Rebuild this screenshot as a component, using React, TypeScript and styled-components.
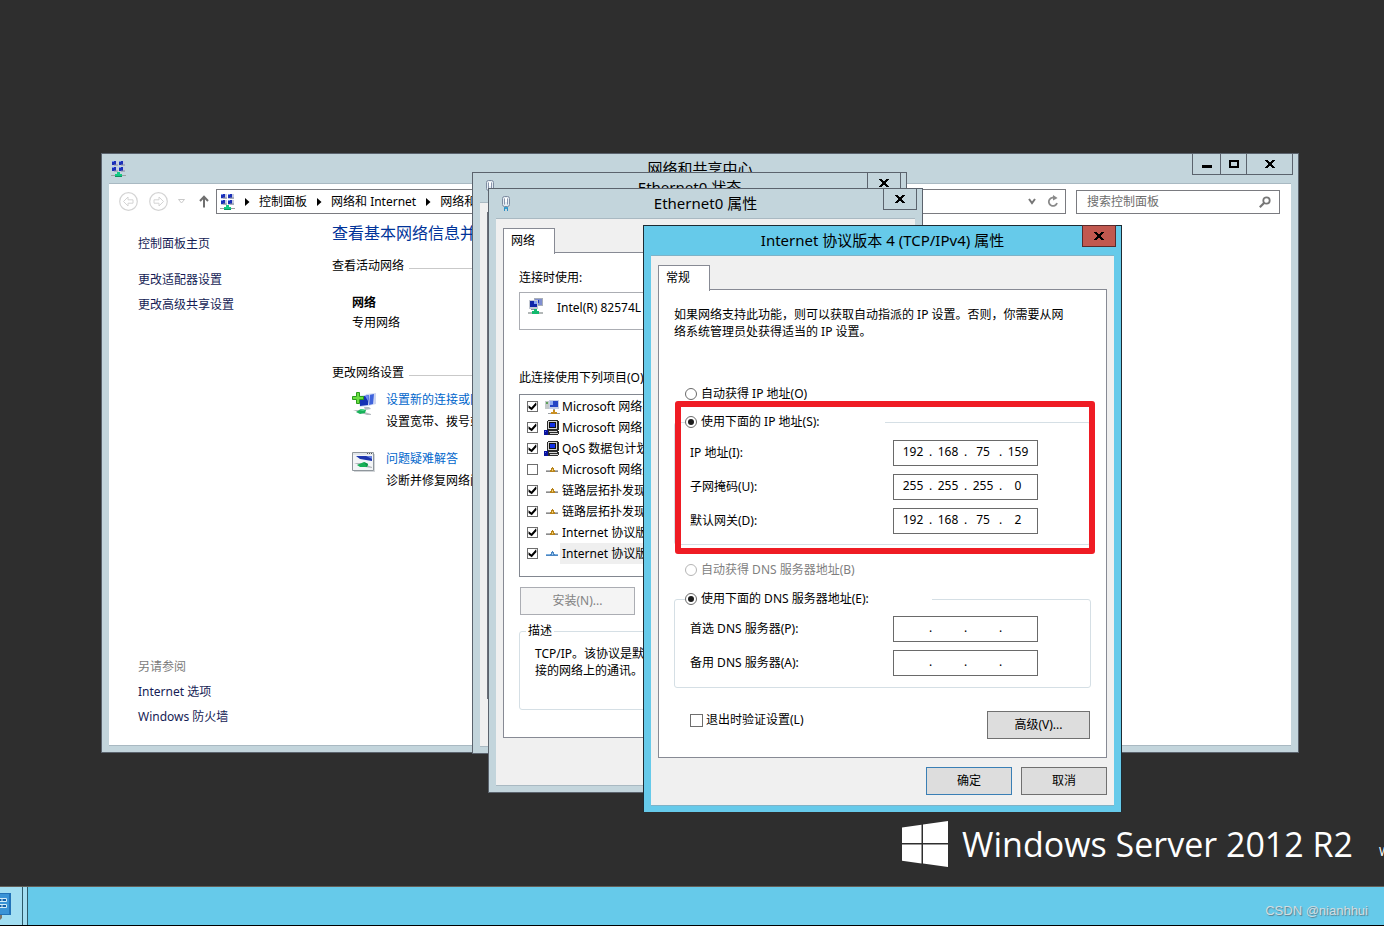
import React from "react";
import styled, { createGlobalStyle, css } from "styled-components";

const GlobalStyle = createGlobalStyle`
  *, *::before, *::after { box-sizing: border-box; }
  html, body { margin: 0; padding: 0; background: #2e2e2e; }
  body, button, input {
    font-family: "Noto Sans", "Noto Sans CJK SC", sans-serif;
    font-size: 12px;
    line-height: 16px;
    color: #000;
  }
  p, h1, h2, ul { margin: 0; padding: 0; font-size: 12px; font-weight: 400; }
  ul { list-style: none; }
  button, input, fieldset, legend { margin: 0; padding: 0; }
  svg { display: block; flex: none; }
`;

/* ---------- desktop ---------- */

const Desktop = styled.div`
  display: flex;
  flex-direction: column;
  min-height: 100vh;
  overflow: hidden;
`;

const Wallpaper = styled.main`
  position: relative;
  flex: 1;
  min-height: 820px;
  overflow: hidden;
  background: #2e2e2e;
`;

const Brand = styled.div`
  position: absolute;
  right: 31px;
  bottom: 18px;
  display: flex;
  align-items: center;
  gap: 14px;
  color: #fff;
  font-family: "Open Sans", sans-serif;
  font-size: 34px;
  line-height: 48px;
  white-space: nowrap;
`;

const BuildLabel = styled.span`
  position: absolute;
  left: calc(100% - 5px);
  bottom: 26px;
  color: #fff;
`;

const Taskbar = styled.footer`
  display: flex;
  align-items: stretch;
  height: 40px;
  border-top: 1px solid #625f58;
  border-bottom: 1px solid #000;
  background: #66caea;
`;

const TaskButton = styled.button`
  width: 23px;
  border: 0;
  border-right: 1px solid #2c5a6a;
  background: #a2def2;
`;

const TaskEdge = styled.span`
  width: 5px;
  border-right: 1px solid #2c5a6a;
  background: #a2def2;
`;

const Watermark = styled.span`
  margin-left: auto;
  padding: 16px 16px 0 0;
  font-family: "Liberation Sans", sans-serif;
  font-size: 13px;
  color: #d3dde1;
  text-shadow: 1px 1px 1px #5c7f8c;
`;

/* ---------- windows ---------- */

const Frame = styled.section<{ $active?: boolean; $x: number; $y: number; $w?: number; $h?: number }>`
  position: absolute;
  left: ${(p) => p.$x}px;
  top: ${(p) => p.$y}px;
  ${(p) => (p.$w ? `width: ${p.$w}px;` : "right: 85px;")}
  ${(p) => (p.$h ? `min-height: ${p.$h}px;` : "")}
  display: flex;
  flex-direction: column;
  border: 1px solid #5b636d;
  background: #c3d5dc;
  ${(p) =>
    p.$active &&
    css`
      border-color: #1d2b33;
      border-bottom: 0;
      background: #66caea;
    `}
`;

const TitleBar = styled.header`
  display: grid;
  grid-template-columns: 1fr auto 1fr;
  height: 29px;
  padding: 0 5px;
`;

const TitleIcon = styled.span`
  padding: 6px 0 0 4px;
`;

const Title = styled.h1`
  font-size: 15px;
  line-height: 29px;
  white-space: nowrap;
`;

const Controls = styled.div`
  display: flex;
  justify-content: flex-end;
  align-items: flex-start;
  margin-top: -1px;
`;

const ControlButton = styled.button<{ $w: number; $danger?: boolean }>`
  display: flex;
  align-items: center;
  justify-content: center;
  width: ${(p) => p.$w}px;
  height: 22px;
  border: 1px solid ${(p) => (p.$danger ? "#5a2a2b" : "#5b636d")};
  background: ${(p) => (p.$danger ? "#c1584f" : "transparent")};
  & + & { border-left: 0; }
`;

const Client = styled.div<{ $white?: boolean; $active?: boolean }>`
  flex: 1;
  display: flex;
  flex-direction: column;
  margin: 0 7px 6px;
  border-top: 1px solid ${(p) => (p.$active ? "#7fb3c8" : "#a9b9c2")};
  border-bottom: 1px solid ${(p) => (p.$active ? "#7fb3c8" : "#a9b9c2")};
  background: ${(p) => (p.$white ? "#fff" : "#f0f0f0")};
`;

/* ---------- network centre ---------- */

const NavRow = styled.nav`
  display: flex;
  align-items: center;
  padding: 5px 11px 0 10px;
`;

const IconButton = styled.button<{ $gap: number }>`
  display: flex;
  border: 0;
  background: none;
  margin-right: ${(p) => p.$gap}px;
`;

const AddressBar = styled.div`
  flex: 1;
  display: flex;
  align-items: center;
  height: 25px;
  margin-right: 10px;
  padding: 0 6px 0 3px;
  border: 1px solid #7a7b80;
`;

const Crumb = styled.a`
  color: #000;
  text-decoration: none;
  white-space: nowrap;
`;

const CrumbArrow = styled.span`
  display: flex;
  justify-content: center;
  width: 24px;
`;

const AddressTools = styled.span`
  display: flex;
  align-items: center;
  gap: 11px;
  margin-left: auto;
`;

const SearchBox = styled.label`
  display: flex;
  align-items: center;
  width: 204px;
  height: 24px;
  margin-top: 1px;
  padding: 0 8px 0 10px;
  border: 1px solid #7a7b80;
`;

const SearchInput = styled.input`
  flex: 1;
  min-width: 0;
  border: 0;
  outline: 0;
  background: none;
  &::placeholder { color: #6d6d6d; opacity: 1; }
`;

const CenterBody = styled.div`
  flex: 1;
  display: flex;
`;

const Sidebar = styled.aside`
  display: flex;
  flex-direction: column;
  justify-content: space-between;
  width: 223px;
  padding: 22px 0 20px 29px;
`;

const LinkList = styled.ul`
  display: flex;
  flex-direction: column;
  gap: 9px;
`;

const SideItem = styled.li<{ $after?: number; $muted?: boolean }>`
  margin-bottom: ${(p) => p.$after || 0}px;
  color: ${(p) => (p.$muted ? "#7b7b7b" : "#151c55")};
`;

const Link = styled.a<{ $blue?: boolean }>`
  color: ${(p) => (p.$blue ? "#0066cc" : "#151c55")};
  text-decoration: none;
  white-space: nowrap;
`;

const CenterMain = styled.div`
  width: 620px;
  padding-top: 9px;
`;

const PageHeading = styled.h2`
  margin-bottom: 15px;
  font-size: 16px;
  line-height: 20px;
  color: #003399;
`;

const SectionHeading = styled.h2`
  display: flex;
  gap: 5px;
  &::after {
    content: "";
    flex: 1;
    height: 1px;
    margin-top: 10px;
    background: #c9c9c9;
  }
`;

const ActiveNetwork = styled.div`
  display: flex;
  flex-direction: column;
  gap: 4px;
  padding: 21px 0 34px 20px;
`;

const TaskList = styled.div`
  display: flex;
  flex-direction: column;
  gap: 21px;
  padding: 11px 0 0 20px;
`;

const TaskItem = styled.div`
  display: flex;
  gap: 10px;
`;

const TaskText = styled.div`
  display: flex;
  flex-direction: column;
  gap: 6px;
  white-space: nowrap;
`;

/* ---------- property sheets ---------- */

const SheetTabs = styled.div`
  padding: 9px 7px 0;
`;

const Tab = styled.button`
  display: block;
  position: relative;
  width: 52px;
  height: 26px;
  margin-bottom: -2px;
  padding: 0 0 2px 7px;
  border: 1px solid #878a94;
  border-bottom: 0;
  background: #fff;
  text-align: left;
`;

const Panel = styled.div<{ $top: number; $bottom: number }>`
  margin: 0 7px;
  padding: ${(p) => p.$top}px 15px ${(p) => p.$bottom}px;
  border: 1px solid #878a94;
  background: #fff;
`;

const StatusPanel = styled.div`
  flex: 1;
  margin: 9px 7px 47px;
  border: 1px solid #6b6f78;
`;

const DeviceBox = styled.div`
  display: flex;
  gap: 13px;
  height: 38px;
  margin: 6px 0 40px;
  padding: 5px 8px;
  border: 1px solid #abadb3;
  line-height: 20px;
`;

const ItemList = styled.ul`
  height: 183px;
  margin: 8px 0 10px;
  padding-top: 1px;
  border: 1px solid #828790;
`;

const ItemRow = styled.li`
  display: flex;
  align-items: center;
  height: 21px;
  padding-left: 7px;
`;

const ItemLabel = styled.label<{ $selected?: boolean }>`
  flex: 1;
  padding-left: 2px;
  line-height: 21px;
  white-space: nowrap;
  background: ${(p) => (p.$selected ? "#efefef" : "none")};
`;

const ItemIcon = styled.span`
  margin-left: 6px;
`;

const CheckBox = styled.input.attrs({ type: "checkbox" })<{ $size: number }>`
  appearance: none;
  flex: none;
  width: ${(p) => p.$size}px;
  height: ${(p) => p.$size}px;
  border: 1px solid #6e6e6e;
  background: #fff;
  &:checked::before {
    content: "";
    display: block;
    height: 100%;
    background: #000;
    clip-path: polygon(6% 36%, 38% 60%, 90% 4%, 94% 34%, 42% 92%, 6% 66%);
  }
`;

const Radio = styled.input.attrs({ type: "radio" })`
  appearance: none;
  flex: none;
  width: 12px;
  height: 12px;
  border: 1px solid #6a6a6a;
  border-radius: 50%;
  background: #fff;
  &:checked::before {
    content: "";
    display: block;
    width: 6px;
    height: 6px;
    margin: 2px;
    border-radius: 50%;
    background: #1c1c1c;
  }
  &:disabled { border-color: #b5b5b5; }
`;

const RadioRow = styled.div<{ $disabled?: boolean }>`
  display: flex;
  align-items: center;
  gap: 4px;
  padding-left: 11px;
  color: ${(p) => (p.$disabled ? "#7f7f7f" : "#000")};
`;

const PushButton = styled.button<{ $w: number; $default?: boolean }>`
  width: ${(p) => p.$w}px;
  height: 28px;
  border: 1px solid ${(p) => (p.$default ? "#3a7fb5" : "#707070")};
  background: #dddddd;
  &:disabled {
    border-color: #abadb3;
    background: #f4f4f4;
    color: #838383;
  }
`;

const ItemActions = styled.div`
  display: flex;
  padding-left: 1px;
`;

const Group = styled.fieldset`
  min-width: 0;
  border: 1px solid #d5dfe5;
  border-radius: 3px;
`;

const DescriptionGroup = styled(Group)`
  margin-top: 8px;
  padding: 6px 15px 30px;
  line-height: 17px;
  white-space: nowrap;
`;

const DescriptionLegend = styled.legend`
  margin-left: -9px;
  padding: 0 2px;
  line-height: 16px;
`;

const Intro = styled.p`
  margin-bottom: 46px;
  line-height: 17px;
  white-space: nowrap;
`;

const Highlighted = styled.div`
  position: relative;
  margin: 12px 0 17px;
  &::after {
    content: "";
    position: absolute;
    inset: -13px -4px -9px 1px;
    border: 6px solid #ef1c24;
    border-radius: 3px;
    pointer-events: none;
  }
`;

const AddressGroup = styled(Group)<{ $top: number; $bottom: number }>`
  display: flex;
  flex-direction: column;
  gap: 8px;
  padding: ${(p) => p.$top}px 15px ${(p) => p.$bottom}px;
`;

const AddressLegend = styled.legend<{ $w: number }>`
  display: flex;
  align-items: center;
  gap: 4px;
  width: ${(p) => p.$w}px;
  margin-left: -5px;
`;

const AddressRow = styled.div`
  display: grid;
  grid-template-columns: 203px 145px;
`;

const RowLabel = styled.span`
  line-height: 26px;
`;

const AddressField = styled.div`
  display: flex;
  align-items: center;
  height: 26px;
  padding: 0 0 2px 4px;
  border: 1px solid #6a6a6a;
  background: #fff;
`;

const Octet = styled.input`
  width: 30px;
  height: 16px;
  border: 0;
  outline: 0;
  background: none;
  text-align: center;
`;

const Dot = styled.span`
  width: 5px;
  text-align: center;
`;

const DnsSection = styled.div`
  margin-top: 13px;
`;

const OptionRow = styled.div`
  display: flex;
  justify-content: space-between;
  margin-top: 23px;
  padding: 0 1px 0 16px;
`;

const CheckLabel = styled.label`
  display: flex;
  align-items: center;
  gap: 3px;
  height: 18px;
`;

const SheetFooter = styled.div<{ $h?: number }>`
  display: flex;
  justify-content: flex-end;
  gap: 9px;
  min-height: ${(p) => p.$h || 0}px;
  padding: 9px 7px 10px;
`;

/* ---------- icons ---------- */

const CloseGlyph = () => (
  <svg width="10" height="8" viewBox="0 0 10 8" shapeRendering="crispEdges">
    <path d="M0 0h3v1h1v1h2v-1h1v-1h3v1h-1v1h-1v1h-1v2h1v1h1v1h1v1h-3v-1h-1v-1h-2v1h-1v1h-3v-1h1v-1h1v-1h1v-2h-1v-1h-1v-1h-1z" fill="#000" />
  </svg>
);

const MinimizeGlyph = () => (
  <svg width="10" height="10" viewBox="0 0 10 10">
    <path d="M0 6h10v3H0z" fill="#000" />
  </svg>
);

const MaximizeGlyph = () => (
  <svg width="10" height="8" viewBox="0 0 10 8">
    <path d="M1 1h8v6H1z" fill="none" stroke="#000" strokeWidth="2" />
  </svg>
);

const NetworkIcon = () => (
  <svg width="15" height="18" viewBox="0 0 15 18" shapeRendering="crispEdges">
    {[
      [1, 1],
      [8, 1],
      [1, 7],
      [8, 7],
    ].map(([x, y]) => (
      <g key={`${x}-${y}`}>
        <path d={`M${x} ${y}h6v5h-6z`} fill="#c5cbe0" />
        <path d={`M${x} ${y}h4v4h-4z`} fill="#1a2fb8" />
        <path d={`M${x} ${y}h2v1h-2z`} fill="#6f8df0" />
        <path d={`M${x + 2} ${y + 3}h4v2h-4z`} fill="#8b909c" opacity="0.5" />
      </g>
    ))}
    <path d="M0 15h15v1H0z" fill="#9aa0a0" />
    <path d="M6 12h3v2h2v2h-7v-2h2z" fill="#12c983" />
    <path d="M4 16h7v1H4z" fill="#0e8f5e" />
  </svg>
);

const PlugIcon = () => (
  <svg width="16" height="18" viewBox="0 0 16 18">
    <rect x="4.500" y="1.500" width="7" height="10" rx="2" fill="#e6edf3" stroke="#7d8ba0" />
    <path d="M6.500 3.500v6M9.500 3.500v6" stroke="#8794ab" />
    <path d="M7 3h2v4H7z" fill="#fff" />
    <path d="M6 12h4v2H6z" fill="#3aa0d0" />
    <path d="M6.500 13v3M9.500 13v3" stroke="#2f8fc4" />
  </svg>
);

const HistoryGlyph = ({ flip }: { flip?: boolean }) => (
  <svg width="19" height="19" viewBox="0 0 19 19" fill="none" stroke="#d4d4d4">
    <circle cx="9.500" cy="9.500" r="8.800" strokeWidth="1.200" />
    <path
      d="M4.500 9.500l4.500-4.500v2.800h5v3.400h-5v2.800z"
      transform={flip ? "matrix(-1 0 0 1 19 0)" : undefined}
    />
  </svg>
);

const RecentGlyph = () => (
  <svg width="7" height="5" viewBox="0 0 7 5">
    <path d="M.5.5h6l-3 3.500z" fill="none" stroke="#c9c9c9" />
  </svg>
);

const UpGlyph = () => (
  <svg width="10" height="13" viewBox="0 0 10 13">
    <path d="M5 12.500V2M1 6l4-4.300L9 6" fill="none" stroke="#6f6f6f" strokeWidth="2" />
  </svg>
);

const CrumbGlyph = () => (
  <svg width="5" height="8" viewBox="0 0 5 8">
    <path d="M0 0l4.500 4L0 8z" fill="#000" />
  </svg>
);

const ChevronGlyph = () => (
  <svg width="8" height="7" viewBox="0 0 8 7">
    <path d="M1 1l3 4 3-4" fill="none" stroke="#767676" strokeWidth="2" />
  </svg>
);

const RefreshGlyph = () => (
  <svg width="12" height="13" viewBox="0 0 12 13">
    <path d="M8.800 3.600A4.200 4.200 0 1 0 10 8" fill="none" stroke="#8a8a8a" strokeWidth="1.800" />
    <path d="M6 0l4.600 3L6 5.600z" fill="#8a8a8a" />
  </svg>
);

const SearchGlyph = () => (
  <svg width="12" height="12" viewBox="0 0 12 12" fill="none" stroke="#767676">
    <circle cx="7.500" cy="4.500" r="3.200" strokeWidth="1.800" />
    <path d="M5 7L.8 11.200" strokeWidth="2.200" />
  </svg>
);

const NewConnectionIcon = () => (
  <svg width="24" height="24" viewBox="0 0 24 24">
    <path d="M14 2l10-1v11l-8 2z" fill="#cdd6f2" />
    <path d="M17 3l5-1-1 10-4 1z" fill="#3f63dc" />
    <path d="M6 4l12-2-1 12-9 1z" fill="#d3dbf3" />
    <path d="M8 5l9-2-1 10-8 1z" fill="#1531b5" />
    <path d="M13 4l4-1-1 6z" fill="#6d8cf3" />
    <path d="M12 15h5l2 2-6 1z" fill="#b4bbc4" />
    <path d="M1 18l5 0 13 4v1l-4 0z" fill="#b6bcc0" />
    <path d="M4 20l5-3 5 1-1 3-5 1z" fill="#18b25a" />
    <path d="M7 18l3-1 3 1-2 1z" fill="#4fda8a" />
    <path d="M4.500.5h3v4h4v3h-4v4h-3v-4h-4v-3h4z" fill="#6ade42" stroke="#2a9a1c" />
  </svg>
);

const TroubleshootIcon = () => (
  <svg width="24" height="22" viewBox="0 0 24 22">
    <path d="M2 3h21v18H2z" fill="#d3d6d9" />
    <path d="M.5 1.500h21v18H.5z" fill="#f3f5f7" stroke="#8f969c" />
    <path d="M1 2h20v2H1z" fill="#e2e6eb" />
    <path d="M15 2.500h1M17 2.500h1M19 2.500h1" stroke="#555" />
    <path d="M4 5h16v5L8 8z" fill="#1d35ad" />
    <path d="M14 5h6v3z" fill="#6782e0" />
    <path d="M2 12l7 0 11 4v1l-7-1z" fill="#b0b6bb" />
    <path d="M5 14l7-3 4 2-1 3-7 0z" fill="#17b057" />
    <path d="M12 11l4 2-1 3z" fill="#0f9247" />
  </svg>
);

const AdapterIcon = () => (
  <svg width="16" height="17" viewBox="0 0 16 17" shapeRendering="crispEdges">
    <path d="M6 0h9v8H6z" fill="#a9afb8" />
    <path d="M7 1h7v6H7z" fill="#7f8ed0" />
    <path d="M8 2h3v3H8z" fill="#2038c0" />
    <path d="M1 2h9v9H1z" fill="#c4c9d2" />
    <path d="M2 3h7v6H2z" fill="#1026a8" />
    <path d="M6 3h3v3H6z" fill="#86a2f5" />
    <path d="M3 11h6v1H3z" fill="#8b9097" />
    <path d="M0 14h15v2H0z" fill="#b2b7b7" />
    <path d="M6 11h3v2h2v3H4v-3h2z" fill="#12b96d" />
  </svg>
);

const ClientIcon = () => (
  <svg width="16" height="16" viewBox="0 0 16 16" shapeRendering="crispEdges">
    <path d="M1 2h4v8H1z" fill="#c3c9ca" />
    <path d="M2 3h2v2H2z" fill="#5da05a" />
    <path d="M5 1h10v9H5z" fill="#c5cee6" />
    <path d="M6 2h8v6H6z" fill="#2444c4" />
    <path d="M6 2h3v4H6z" fill="#8fabf2" />
    <path d="M9 10h2v2H9z" fill="#a0a5aa" />
    <path d="M4 14h12v1H4z" fill="#9a9ea2" />
    <path d="M9 11h2v2h2v2H7v-2h2z" fill="#c98f22" />
  </svg>
);

const ServiceIcon = () => (
  <svg width="16" height="16" viewBox="0 0 16 16" shapeRendering="crispEdges">
    <path d="M4 0h10v1h1v9H3V1h1z" fill="#2a2a2a" />
    <path d="M4 1h9v8H4z" fill="#d4d4d4" />
    <path d="M5 2h7v6H5z" fill="#111" />
    <path d="M6 3h5v4H6z" fill="#1230e6" />
    <path d="M3 10h11v1h1v3h-1v1H4z" fill="#2a2a2a" />
    <path d="M5 11h8v1H5zM6 13h8v1H6z" fill="#d4d4d4" />
    <path d="M0 10h4v5H0z" fill="#0a139c" />
    <path d="M1 11h1v1H1z" fill="#4a60ff" />
  </svg>
);

const ProtocolIcon = ({ selected }: { selected?: boolean }) => (
  <svg width="16" height="16" viewBox="0 0 16 16" shapeRendering="crispEdges">
    <path d="M2 8h12v1H2z" fill={selected ? "#7fb2e2" : "#b4b4b4"} />
    <path d="M2 9h12v1H2z" fill={selected ? "#4d86c0" : "#8a8a8a"} />
    <path d="M8 5h1v1h1v2h1v2H6V8h1V6h1z" fill={selected ? "#4a86c4" : "#b8831a"} />
    <path d="M8 7h1v2H8z" fill={selected ? "#9fcaf0" : "#f2cd6a"} />
  </svg>
);

const WindowsLogo = () => (
  <svg width="46" height="46" viewBox="0 0 46 46" fill="#fff">
    <path d="M0 6.500l19.500-2.700V22H0zM21 3.600L46 0v22H21zM0 23.500h19.500v18.900L0 39.800zM21 23.500h25V46l-25-3.400z" />
  </svg>
);

const ServerManagerIcon = () => (
  <svg width="12" height="28" viewBox="0 0 12 28">
    <path d="M0 1h11v22H0z" fill="#2272b8" />
    <path d="M0 2h9v20H0z" fill="#3a93d6" />
    <path d="M-1 6.500h7.500v3H-1zM-1 12.500h7.500v3H-1z" fill="#1560a8" stroke="#d4eefa" />
    <path d="M2 6v4M2 12v4" stroke="#d4eefa" />
    <path d="M0 23h2v3l-2 2z" fill="#7d7468" />
  </svg>
);

/* ---------- pieces ---------- */

const CloseButton = ({ danger, width = 34 }: { danger?: boolean; width?: number }) => (
  <ControlButton type="button" aria-label="关闭" $w={width} $danger={danger}>
    <CloseGlyph />
  </ControlButton>
);

const IpField = ({ label, value }: { label: string; value: string[] }) => (
  <AddressRow role="group" aria-label={label}>
    <RowLabel>{label}</RowLabel>
    <AddressField>
      {value.map((part, i) => (
        <React.Fragment key={i}>
          {i > 0 && <Dot>.</Dot>}
          <Octet aria-label={`${label} ${i + 1}`} defaultValue={part} maxLength={3} />
        </React.Fragment>
      ))}
    </AddressField>
  </AddressRow>
);

const EMPTY = ["", "", "", ""];

const ITEMS = [
  { label: "Microsoft 网络客户端", icon: <ClientIcon />, on: true },
  { label: "Microsoft 网络的文件和打印机共享", icon: <ServiceIcon />, on: true },
  { label: "QoS 数据包计划程序", icon: <ServiceIcon />, on: true },
  { label: "Microsoft 网络适配器多路传送器协议", icon: <ProtocolIcon />, on: false },
  { label: "链路层拓扑发现映射器 I/O 驱动程序", icon: <ProtocolIcon />, on: true },
  { label: "链路层拓扑发现响应程序", icon: <ProtocolIcon />, on: true },
  { label: "Internet 协议版本 6 (TCP/IPv6)", icon: <ProtocolIcon />, on: true },
  { label: "Internet 协议版本 4 (TCP/IPv4)", icon: <ProtocolIcon selected />, on: true, selected: true },
];

const NetworkCenter = () => (
  <Frame $x={101} $y={153} $h={600}>
    <TitleBar>
      <TitleIcon>
        <NetworkIcon />
      </TitleIcon>
      <Title>网络和共享中心</Title>
      <Controls>
        <ControlButton type="button" aria-label="最小化" $w={29}>
          <MinimizeGlyph />
        </ControlButton>
        <ControlButton type="button" aria-label="最大化" $w={26}>
          <MaximizeGlyph />
        </ControlButton>
        <CloseButton width={46} />
      </Controls>
    </TitleBar>
    <Client $white>
      <NavRow>
        <IconButton type="button" aria-label="后退" $gap={11}>
          <HistoryGlyph />
        </IconButton>
        <IconButton type="button" aria-label="前进" $gap={10}>
          <HistoryGlyph flip />
        </IconButton>
        <IconButton type="button" aria-label="最近位置" $gap={14}>
          <RecentGlyph />
        </IconButton>
        <IconButton type="button" aria-label="向上" $gap={7}>
          <UpGlyph />
        </IconButton>
        <AddressBar>
          <NetworkIcon />
          <CrumbArrow>
            <CrumbGlyph />
          </CrumbArrow>
          <Crumb href="#">控制面板</Crumb>
          <CrumbArrow>
            <CrumbGlyph />
          </CrumbArrow>
          <Crumb href="#">网络和 Internet</Crumb>
          <CrumbArrow>
            <CrumbGlyph />
          </CrumbArrow>
          <Crumb href="#">网络和共享中心</Crumb>
          <AddressTools>
            <ChevronGlyph />
            <RefreshGlyph />
          </AddressTools>
        </AddressBar>
        <SearchBox>
          <SearchInput type="text" aria-label="搜索控制面板" placeholder="搜索控制面板" />
          <SearchGlyph />
        </SearchBox>
      </NavRow>
      <CenterBody>
        <Sidebar>
          <LinkList>
            <SideItem $after={11}>
              <Link href="#">控制面板主页</Link>
            </SideItem>
            <SideItem>
              <Link href="#">更改适配器设置</Link>
            </SideItem>
            <SideItem>
              <Link href="#">更改高级共享设置</Link>
            </SideItem>
          </LinkList>
          <LinkList>
            <SideItem $muted>另请参阅</SideItem>
            <SideItem>
              <Link href="#">Internet 选项</Link>
            </SideItem>
            <SideItem>
              <Link href="#">Windows 防火墙</Link>
            </SideItem>
          </LinkList>
        </Sidebar>
        <CenterMain>
          <PageHeading>查看基本网络信息并设置连接</PageHeading>
          <SectionHeading>查看活动网络</SectionHeading>
          <ActiveNetwork>
            <strong>网络</strong>
            <span>专用网络</span>
          </ActiveNetwork>
          <SectionHeading>更改网络设置</SectionHeading>
          <TaskList>
            <TaskItem>
              <NewConnectionIcon />
              <TaskText>
                <Link href="#" $blue>
                  设置新的连接或网络
                </Link>
                <span>设置宽带、拨号或 VPN 连接</span>
              </TaskText>
            </TaskItem>
            <TaskItem>
              <TroubleshootIcon />
              <TaskText>
                <Link href="#" $blue>
                  问题疑难解答
                </Link>
                <span>诊断并修复网络问题</span>
              </TaskText>
            </TaskItem>
          </TaskList>
        </CenterMain>
      </CenterBody>
    </Client>
  </Frame>
);

const StatusWindow = () => (
  <Frame $x={472} $y={172} $w={435} $h={582}>
    <TitleBar>
      <TitleIcon>
        <PlugIcon />
      </TitleIcon>
      <Title>Ethernet0 状态</Title>
      <Controls>
        <CloseButton />
      </Controls>
    </TitleBar>
    <Client>
      <StatusPanel />
    </Client>
  </Frame>
);

const AdapterProperties = () => (
  <Frame $x={488} $y={188} $w={435}>
    <TitleBar>
      <TitleIcon>
        <PlugIcon />
      </TitleIcon>
      <Title>Ethernet0 属性</Title>
      <Controls>
        <CloseButton />
      </Controls>
    </TitleBar>
    <Client>
      <SheetTabs>
        <Tab type="button">网络</Tab>
      </SheetTabs>
      <Panel $top={17} $bottom={27}>
        <p>连接时使用:</p>
        <DeviceBox>
          <AdapterIcon />
          <span>Intel(R) 82574L 千兆网络连接</span>
        </DeviceBox>
        <p>此连接使用下列项目(O):</p>
        <ItemList>
          {ITEMS.map((item, i) => (
            <ItemRow key={item.label}>
              <CheckBox id={`item-${i}`} $size={11} defaultChecked={item.on} />
              <ItemIcon>{item.icon}</ItemIcon>
              <ItemLabel htmlFor={`item-${i}`} $selected={item.selected}>
                {item.label}
              </ItemLabel>
            </ItemRow>
          ))}
        </ItemList>
        <ItemActions>
          <PushButton type="button" $w={115} disabled>
            安装(N)...
          </PushButton>
        </ItemActions>
        <DescriptionGroup>
          <DescriptionLegend>描述</DescriptionLegend>
          TCP/IP。该协议是默认的广域网络协议
          <br />
          接的网络上的通讯。
        </DescriptionGroup>
      </Panel>
      <SheetFooter $h={47} />
    </Client>
  </Frame>
);

const Ipv4Properties = () => (
  <Frame $active $x={643} $y={225} $w={479}>
    <TitleBar>
      <span />
      <Title>Internet 协议版本 4 (TCP/IPv4) 属性</Title>
      <Controls>
        <CloseButton danger />
      </Controls>
    </TitleBar>
    <Client $active>
      <SheetTabs>
        <Tab type="button">常规</Tab>
      </SheetTabs>
      <Panel $top={16} $bottom={18}>
        <Intro>
          如果网络支持此功能，则可以获取自动指派的 IP 设置。否则，你需要从网
          <br />
          络系统管理员处获得适当的 IP 设置。
        </Intro>
        <RadioRow>
          <Radio id="ip-auto" name="ip" />
          <label htmlFor="ip-auto">自动获得 IP 地址(O)</label>
        </RadioRow>
        <Highlighted>
          <AddressGroup $top={10} $bottom={10}>
            <AddressLegend $w={200}>
              <Radio id="ip-manual" name="ip" defaultChecked />
              <label htmlFor="ip-manual">使用下面的 IP 地址(S):</label>
            </AddressLegend>
            <IpField label="IP 地址(I):" value={["192", "168", "75", "159"]} />
            <IpField label="子网掩码(U):" value={["255", "255", "255", "0"]} />
            <IpField label="默认网关(D):" value={["192", "168", "75", "2"]} />
          </AddressGroup>
        </Highlighted>
        <RadioRow $disabled>
          <Radio id="dns-auto" name="dns" disabled />
          <label htmlFor="dns-auto">自动获得 DNS 服务器地址(B)</label>
        </RadioRow>
        <DnsSection>
          <AddressGroup $top={9} $bottom={11}>
            <AddressLegend $w={247}>
              <Radio id="dns-manual" name="dns" defaultChecked />
              <label htmlFor="dns-manual">使用下面的 DNS 服务器地址(E):</label>
            </AddressLegend>
            <IpField label="首选 DNS 服务器(P):" value={EMPTY} />
            <IpField label="备用 DNS 服务器(A):" value={EMPTY} />
          </AddressGroup>
        </DnsSection>
        <OptionRow>
          <CheckLabel>
            <CheckBox $size={13} />
            退出时验证设置(L)
          </CheckLabel>
          <PushButton type="button" $w={103}>
            高级(V)...
          </PushButton>
        </OptionRow>
      </Panel>
      <SheetFooter>
        <PushButton type="button" $w={86} $default>
          确定
        </PushButton>
        <PushButton type="button" $w={86}>
          取消
        </PushButton>
      </SheetFooter>
    </Client>
  </Frame>
);

export default function App() {
  return (
    <>
      <GlobalStyle />
      <Desktop>
        <Wallpaper>
          <Brand>
            <WindowsLogo />
            <span>Windows Server 2012 R2</span>
          </Brand>
          <BuildLabel>W</BuildLabel>
          <NetworkCenter />
          <StatusWindow />
          <AdapterProperties />
          <Ipv4Properties />
        </Wallpaper>
        <Taskbar>
          <TaskButton type="button" aria-label="服务器管理器">
            <ServerManagerIcon />
          </TaskButton>
          <TaskEdge />
          <Watermark>CSDN @nianhhui</Watermark>
        </Taskbar>
      </Desktop>
    </>
  );
}
